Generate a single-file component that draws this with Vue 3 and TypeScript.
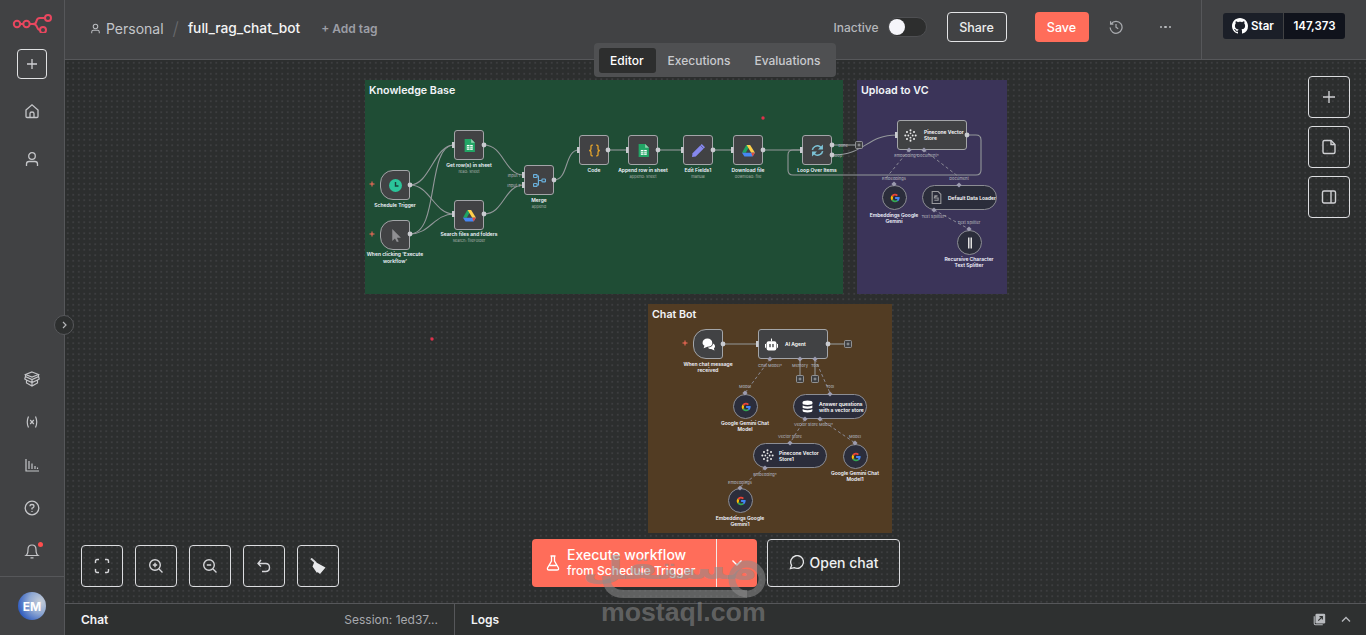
<script setup lang="ts">
interface FlowNode { id: string; x: number; y: number; w: number; h: number; shape: 'box' | 'trigger' | 'circle' | 'pill' | 'wide'; icon: string; text?: string[] }
interface Caption { x: number; y: number; t: string; sub?: boolean }

const groups = [
  { t: 'Knowledge Base', x: 365, y: 80, w: 478, h: 214, c: '#1f4d35' },
  { t: 'Upload to VC', x: 857, y: 80, w: 150, h: 214, c: '#3b3459' },
  { t: 'Chat Bot', x: 648, y: 303.5, w: 244, h: 229.5, c: '#523c23' },
]

const nodes: FlowNode[] = [
  { id: 'a', x: 380, y: 170, w: 30, h: 30, shape: 'trigger', icon: 'clock' },
  { id: 'b', x: 380, y: 220, w: 30, h: 30, shape: 'trigger', icon: 'cursor' },
  { id: 'c', x: 454, y: 130, w: 30, h: 30, shape: 'box', icon: 'sheet' },
  { id: 'd', x: 454, y: 200, w: 30, h: 30, shape: 'box', icon: 'drive' },
  { id: 'e', x: 524, y: 165, w: 30, h: 30, shape: 'box', icon: 'merge' },
  { id: 'f', x: 579, y: 135, w: 30, h: 30, shape: 'box', icon: 'code' },
  { id: 'g', x: 628, y: 135, w: 30, h: 30, shape: 'box', icon: 'sheet' },
  { id: 'h', x: 683, y: 135, w: 30, h: 30, shape: 'box', icon: 'pen' },
  { id: 'i', x: 733, y: 135, w: 30, h: 30, shape: 'box', icon: 'drive' },
  { id: 'j', x: 802, y: 135, w: 30, h: 30, shape: 'box', icon: 'loop' },
  { id: 'k', x: 897, y: 120, w: 70, h: 30, shape: 'wide', icon: 'pine', text: ['Pinecone Vector', 'Store'] },
  { id: 'l', x: 882, y: 185, w: 25, h: 25, shape: 'circle', icon: 'google' },
  { id: 'm', x: 922, y: 185, w: 75, h: 25, shape: 'pill', icon: 'doc', text: ['Default Data Loader'] },
  { id: 'n', x: 957, y: 230, w: 25, h: 25, shape: 'circle', icon: 'split' },
  { id: 'o', x: 693, y: 329, w: 30, h: 30, shape: 'trigger', icon: 'chat' },
  { id: 'p', x: 758, y: 329, w: 70, h: 30, shape: 'wide', icon: 'robot', text: ['AI Agent'] },
  { id: 'q', x: 733, y: 394, w: 25, h: 25, shape: 'circle', icon: 'google' },
  { id: 'r', x: 793, y: 394, w: 74, h: 25, shape: 'pill', icon: 'db', text: ['Answer questions', 'with a vector store'] },
  { id: 's', x: 753, y: 443, w: 74, h: 25, shape: 'pill', icon: 'pine', text: ['Pinecone Vector', 'Store1'] },
  { id: 't', x: 843, y: 444, w: 25, h: 25, shape: 'circle', icon: 'google' },
  { id: 'u', x: 728, y: 488, w: 25, h: 25, shape: 'circle', icon: 'google' },
]

const captions: Caption[] = [
  { x: 395, y: 205, t: 'Schedule Trigger' },
  { x: 395, y: 254, t: "When clicking 'Execute" },
  { x: 395, y: 261, t: "workflow'" },
  { x: 469, y: 165, t: 'Get row(s) in sheet' },
  { x: 469, y: 171.5, t: 'read: sheet', sub: true },
  { x: 469, y: 234, t: 'Search files and folders' },
  { x: 469, y: 241, t: 'search: fileFolder', sub: true },
  { x: 539, y: 200, t: 'Merge' },
  { x: 539, y: 206.5, t: 'append', sub: true },
  { x: 594, y: 170, t: 'Code' },
  { x: 643, y: 170, t: 'Append row in sheet' },
  { x: 643, y: 176.5, t: 'append: sheet', sub: true },
  { x: 698, y: 170, t: 'Edit Fields1' },
  { x: 698, y: 176.5, t: 'manual', sub: true },
  { x: 748, y: 170, t: 'Download file' },
  { x: 748, y: 176.5, t: 'download: file', sub: true },
  { x: 817, y: 170, t: 'Loop Over Items' },
  { x: 894, y: 215, t: 'Embeddings Google' },
  { x: 894, y: 221, t: 'Gemini' },
  { x: 969, y: 259, t: 'Recursive Character' },
  { x: 969, y: 265, t: 'Text Splitter' },
  { x: 708, y: 364, t: 'When chat message' },
  { x: 708, y: 370, t: 'received' },
  { x: 745, y: 423, t: 'Google Gemini Chat' },
  { x: 745, y: 429, t: 'Model' },
  { x: 855, y: 473, t: 'Google Gemini Chat' },
  { x: 855, y: 479, t: 'Model1' },
  { x: 740, y: 518, t: 'Embeddings Google' },
  { x: 740, y: 524, t: 'Gemini1' },
]

const ports: Caption[] = [
  { x: 906, y: 155, t: 'Embedding*' }, { x: 928, y: 155, t: 'Document*' },
  { x: 894, y: 178, t: 'Embeddings' }, { x: 959, y: 178, t: 'Document' },
  { x: 934, y: 216, t: 'Text Splitter*' }, { x: 969, y: 222, t: 'Text Splitter' },
  { x: 770, y: 365, t: 'Chat Model*' }, { x: 800, y: 365, t: 'Memory' }, { x: 815, y: 365, t: 'Tool' },
  { x: 745, y: 386, t: 'Model' }, { x: 830, y: 386, t: 'Tool' },
  { x: 806, y: 423.5, t: 'Vector Store' }, { x: 826, y: 423.5, t: 'Model*' },
  { x: 790, y: 436, t: 'Vector Store' }, { x: 855, y: 436, t: 'Model' },
  { x: 765, y: 473.5, t: 'Embedding*' }, { x: 740, y: 481.5, t: 'Embeddings' },
  { x: 514, y: 174.5, t: 'Input 1' }, { x: 514, y: 184.5, t: 'Input 2' },
  { x: 843, y: 145, t: 'done' }, { x: 838, y: 155, t: 'loop' },
]

const solid = [
  'M410 185 C430 185 434 145 454 145', 'M410 185 C430 185 434 214 454 214',
  'M410 234 C440 234 426 145 454 145', 'M410 234 C430 234 434 214 454 214',
  'M484 145 C504 145 504 175 524 175', 'M484 214 C504 214 504 185 524 185',
  'M554 180 C569 180 564 150 579 150', 'M608 150 H628', 'M658 150 H683', 'M713 150 H733', 'M763 150 H802',
  'M832 145 H855', 'M832 155 C866 155 866 135 897 135',
  'M967 135 H976 Q981 135 981 140 V170 Q981 175 976 175 H793 Q788 175 788 170 V155 Q788 150 793 150 H802',
  'M723 344 H758', 'M828 344 H844', 'M800 359 V375', 'M815 359 V375',
]
const dashed = [
  'M909 150 L886 178', 'M924 150 L959 177', 'M934 210 L969 229',
  'M770 359 L745 393', 'M815 359 L830 393', 'M805 419 L790 443', 'M820 419 L855 443', 'M765 468 L740 487',
]
const dots = [
  [410, 185], [410, 234], [484, 145], [484, 214], [554, 180], [608, 150], [658, 150], [713, 150], [763, 150],
  [832, 145], [832, 155], [967, 135], [723, 344], [828, 344],
]
const inputs = [[454, 145], [454, 214], [524, 175], [524, 185], [579, 150], [628, 150], [683, 150], [733, 150], [802, 150], [897, 135], [758, 344]]
const diamonds = [
  [909, 150], [924, 150], [894, 184], [959, 185], [934, 210], [969, 229],
  [770, 359], [800, 359], [815, 359], [745, 393], [830, 394], [805, 419], [820, 419], [790, 443], [855, 443], [765, 468], [740, 488],
]
const plusBoxes = [[859, 145], [848, 344], [800, 379], [815, 379]]
const asterisks = [[372, 184], [372, 234], [685, 343]]
const redDots = [[763, 118], [432, 339]]

const zoomTools = ['fit', 'zin', 'zout', 'undo', 'broom']
</script>

<template>
  <div class="app">
    <svg class="defs" width="0" height="0" aria-hidden="true">
      <symbol id="clock" viewBox="0 0 24 24"><circle cx="12" cy="12" r="12" fill="#2bc49a"/><path d="M12 5.500V13h5.500" fill="none" stroke="#17403a" stroke-width="2.600"/></symbol>
      <symbol id="cursor" viewBox="0 0 24 24"><path d="M6 0 L22 16 H14.500 L18 23 L14.500 24 L11 17.500 L6 22 Z" fill="#8f8f92"/></symbol>
      <symbol id="sheet" viewBox="0 0 24 24"><path d="M3 0H15L22 7V24H3Z" fill="#22a565"/><path d="M15 0L22 7H15Z" fill="#8ed1ae"/><path d="M7 11H18V20H7Z" fill="#fff"/><path d="M7 14H18M7 17H18M12.500 11V20" stroke="#22a565" stroke-width="1.200"/></symbol>
      <symbol id="drive" viewBox="0 0 24 24"><path d="M8 2H15L7 16H0Z" fill="#1fa463"/><path d="M15 2L24 16H17L8.500 2Z" fill="#ffd04b"/><path d="M0 16L4.500 23H19.500L24 16Z" fill="#4687f4"/><path d="M17 16H24L19.500 23Z" fill="#e14b3b"/></symbol>
      <symbol id="merge" viewBox="0 0 24 24"><g fill="none" stroke="#6ab0dc" stroke-width="2.200"><rect x="1" y="1" width="6.500" height="5.500" rx="1.200"/><rect x="1" y="17.500" width="6.500" height="5.500" rx="1.200"/><rect x="16.500" y="9.200" width="6.500" height="5.500" rx="1.200"/><path d="M7.500 3.700H10V20.300H7.500M10 12H16.500"/></g></symbol>
      <symbol id="code" viewBox="0 0 24 24"><g fill="none" stroke="#e3a32b" stroke-width="2.400"><path d="M9 2H7.500Q5.500 2 5.500 4V9Q5.500 12 2 12Q5.500 12 5.500 15V20Q5.500 22 7.500 22H9"/><path d="M15 2H16.500Q18.500 2 18.500 4V9Q18.500 12 22 12Q18.500 12 18.500 15V20Q18.500 22 16.500 22H15"/></g></symbol>
      <symbol id="pen" viewBox="0 0 24 24"><path d="M18 0L24 6L7 23L0 24L1 17Z" fill="#8688ee"/><path d="M15.500 2.500L21.500 8.500" stroke="#414244" stroke-width="1"/></symbol>
      <symbol id="loop" viewBox="0 0 24 24"><g fill="none" stroke="#7cc3d6" stroke-width="2.800"><path d="M2.500 11C3.500 5 11 1.500 16 4.500L20 8"/><path d="M21.500 13C20.500 19 13 22.500 8 19.500L4 16"/></g><path d="M22 1V10H13Z" fill="#7cc3d6"/><path d="M2 23V14H11Z" fill="#7cc3d6"/></symbol>
      <symbol id="pine" viewBox="0 0 24 24"><g fill="#e8e8e8"><circle cx="12" cy="2.500" r="1.900"/><circle cx="12" cy="21.500" r="1.900"/><circle cx="2.500" cy="12" r="1.900"/><circle cx="21.500" cy="12" r="1.900"/><circle cx="5.500" cy="5.500" r="1.900"/><circle cx="18.500" cy="5.500" r="1.900"/><circle cx="5.500" cy="18.500" r="1.900"/><circle cx="18.500" cy="18.500" r="1.900"/><circle cx="12" cy="8" r="1.700"/><circle cx="12" cy="16" r="1.700"/><circle cx="8" cy="12" r="1.700"/><circle cx="16" cy="12" r="1.700"/></g></symbol>
      <symbol id="google" viewBox="0 0 24 24"><path d="M5 7A8.500 8.500 0 0 1 18 6L15.300 8.700A4.800 4.800 0 0 0 8.200 9.800Z" fill="#ea4335"/><path d="M5 7L8.200 9.800A4.800 4.800 0 0 0 8.200 14.300L5 17A8.800 8.800 0 0 1 5 7Z" fill="#fbbc05"/><path d="M5 17L8.200 14.300A4.800 4.800 0 0 0 15 16L18 18.500A8.800 8.800 0 0 1 5 17Z" fill="#34a853"/><path d="M21.200 10.200H12.200V13.800H17C16.600 15 15.800 15.700 15 16L18 18.500C20 16.700 21.800 14 21.200 10.200Z" fill="#4285f4"/></symbol>
      <symbol id="doc" viewBox="0 0 24 24"><g fill="none" stroke="#9a9a9e" stroke-width="2"><path d="M4 1H15L20 6V23H4Z"/><path d="M8 9H14Q8 9 8 13H15V17H8"/></g></symbol>
      <symbol id="split" viewBox="0 0 24 24"><path d="M8 1H11V23H8ZM13 1H16V23H13Z" fill="#e0e0e0"/></symbol>
      <symbol id="chat" viewBox="0 0 24 24"><path d="M1 9C1 4 5 1 10 1S19 4 19 9 15 16 10 16L3 19 4.500 14C2.500 13 1 11 1 9Z" fill="#fff"/><path d="M20 10C23 11 24 13 24 15 24 17 23 18 22 19L23 23 17 20.500C14 20.500 12 19.500 11 17.500 15 17.500 20.500 15 20 10Z" fill="#fff"/></symbol>
      <symbol id="robot" viewBox="0 0 24 24"><path d="M12 1V6" stroke="#fff" stroke-width="2"/><rect x="3" y="6" width="18" height="17" rx="3.500" fill="#fff"/><rect x="0" y="11" width="2" height="7" fill="#fff"/><rect x="22" y="11" width="2" height="7" fill="#fff"/><rect x="8" y="11" width="2.500" height="6" fill="#414244"/><rect x="13.500" y="11" width="2.500" height="6" fill="#414244"/></symbol>
      <symbol id="db" viewBox="0 0 24 24"><g fill="#fff"><path d="M3 4Q3 1 12 1T21 4V7Q21 9 12 9T3 7Z"/><path d="M3 10Q7 12 12 12T21 10V14Q21 16 12 16T3 14Z"/><path d="M3 17Q7 19 12 19T21 17V20Q21 23 12 23T3 20Z"/></g></symbol>
    </svg>

    <aside class="side">
      <svg class="logo" viewBox="0 0 40 20" fill="none" stroke="#e8475f" stroke-width="2">
        <circle cx="5" cy="11" r="3.200"/><circle cx="14.500" cy="11" r="3.200"/><circle cx="31" cy="17" r="3"/><circle cx="36" cy="5" r="3"/>
        <path d="M8.200 11H11.300M17.700 11H21Q24 11 24.500 8T28 5H33M21 11Q24 11 25 14T28 17"/>
      </svg>
      <button class="side-add"><svg width="10" height="10" viewBox="0 0 14 14" stroke="#cfd0d3" stroke-width="1.800"><path d="M7 0V14M0 7H14"/></svg></button>
      <div class="side-icons top-icons">
        <svg viewBox="0 0 16 16" fill="none" stroke="#c4c5c8" stroke-width="1.300"><path d="M2 7L8 1.800 14 7V13.500Q14 14.500 13 14.500H3Q2 14.500 2 13.500Z"/><path d="M6 14.500V10.500Q6 9 8 9T10 10.500V14.500"/></svg>
        <svg viewBox="0 0 16 16" fill="none" stroke="#c4c5c8" stroke-width="1.300"><circle cx="8" cy="5" r="3.300"/><path d="M2.500 15V13Q2.500 10.500 5 10.500H11Q13.500 10.500 13.500 13V15"/></svg>
      </div>
      <div class="side-icons bottom-icons">
        <svg viewBox="0 0 16 16" fill="none" stroke="#c4c5c8" stroke-width="1.200"><path d="M8 1L14.500 3.500 8 6 1.500 3.500Z"/><path d="M1.500 3.500V5.500L8 8.500 14.500 5.500V3.500M1.500 5.500L0.800 8 2.500 9V12L8 15 13.500 12V9L15.200 8 14.500 5.500M8 8.500V15M2.500 9L8 11.500 13.500 9"/></svg>
        <svg viewBox="0 0 16 16" fill="none" stroke="#c4c5c8" stroke-width="1.200"><path d="M4.500 2.500Q2 8 4.500 13.500M11.500 2.500Q14 8 11.500 13.500M6.200 6L9.800 10M9.800 6L6.200 10"/></svg>
        <svg viewBox="0 0 16 16" fill="none" stroke="#c4c5c8" stroke-width="1.200"><path d="M2 2V14H15M5 12V4M8 12V6.500M11 12V9M13.500 12V10.500"/></svg>
        <svg viewBox="0 0 16 16" fill="none" stroke="#c4c5c8" stroke-width="1.300"><circle cx="8" cy="8" r="6.800"/><path d="M6 6.300Q6 4.500 8 4.500T10 6.300Q10 7.500 8 8.300V9.500M8 11V12"/></svg>
        <span class="bell">
          <svg viewBox="0 0 16 16" fill="none" stroke="#c4c5c8" stroke-width="1.200"><path d="M2 12.500Q4 11 4 6.500 4 2 8 2T12 6.500Q12 11 14 12.500ZM6.500 14.800H9.500"/></svg>
          <i></i>
        </span>
      </div>
      <div class="side-foot"><span class="avatar">EM</span></div>
      <button class="collapse"><svg width="8" height="8" viewBox="0 0 8 8" fill="none" stroke="#b5b6b9" stroke-width="1.200"><path d="M3 1L6 4 3 7"/></svg></button>
    </aside>

    <main class="main">
      <header class="head">
        <div class="crumbs">
          <svg class="crumb-ic" width="11" height="11" viewBox="0 0 16 16" fill="none" stroke="#b9bbbf" stroke-width="1.500"><circle cx="8" cy="5" r="3.300"/><path d="M2.500 15V13Q2.500 10.500 5 10.500H11Q13.500 10.500 13.500 13V15"/></svg>
          <span class="personal">Personal</span>
          <span class="slash">/</span>
          <span class="title">full_rag_chat_bot</span>
          <span class="tag">+ Add tag</span>
        </div>
        <div class="actions">
          <span class="inactive">Inactive</span>
          <span class="toggle"><i></i></span>
          <button class="share">Share</button>
          <button class="save">Save</button>
          <svg class="hist" width="14" height="14" viewBox="0 0 16 16" fill="none" stroke="#a9abaf" stroke-width="1.400"><path d="M2.500 4.500A6.800 6.800 0 1 1 1.300 8.500M1.800 1.500V4.800H5M8 4.500V8.300L10.500 10"/></svg>
          <span class="more"><i></i><i></i><i></i></span>
        </div>
        <div class="gh">
          <span class="gh-star">
            <svg width="16" height="16" viewBox="0 0 16 16" fill="#fff"><path d="M8 0C3.580 0 0 3.580 0 8c0 3.540 2.290 6.530 5.470 7.590.4.070.55-.17.55-.38 0-.19-.01-.82-.01-1.490-2.010.37-2.530-.49-2.690-.94-.09-.23-.48-.94-.82-1.130-.28-.15-.68-.52-.01-.53.63-.01 1.080.58 1.230.82.72 1.210 1.870.87 2.330.66.070-.52.28-.87.51-1.070-1.780-.2-3.640-.89-3.640-3.950 0-.87.31-1.590.82-2.150-.08-.2-.36-1.020.08-2.120 0 0 .67-.21 2.200.82.640-.18 1.320-.27 2-.27s1.360.09 2 .27c1.530-1.040 2.200-.82 2.200-.82.44 1.100.16 1.920.08 2.120.51.560.82 1.270.82 2.150 0 3.070-1.870 3.750-3.650 3.950.29.250.54.730.54 1.480 0 1.070-.01 1.930-.01 2.200 0 .21.150.46.550.38A8.010 8.010 0 0 0 16 8c0-4.420-3.580-8-8-8z"/></svg>
            Star
          </span>
          <span class="gh-count">147,373</span>
        </div>
      </header>

      <div class="tabs">
        <span class="tab active">Editor</span>
        <span class="tab">Executions</span>
        <span class="tab">Evaluations</span>
      </div>

      <section class="canvas">
        <div class="world">
          <div v-for="g in groups" :key="g.t" class="group" :style="{ left: g.x + 'px', top: g.y + 'px', width: g.w + 'px', height: g.h + 'px', background: g.c }">{{ g.t }}</div>

          <svg class="wires" width="1366" height="635" viewBox="0 0 1366 635">
            <path v-for="d in solid" :key="d" :d="d" class="wire"/>
            <path v-for="d in dashed" :key="d" :d="d" class="dash"/>
          </svg>

          <div v-for="n in nodes" :key="n.id" class="node" :class="n.shape" :style="{ left: n.x + 'px', top: n.y + 'px', width: n.w + 'px', height: n.h + 'px' }">
            <svg class="node-ic"><use :href="'#' + n.icon"/></svg>
            <span v-if="n.text" class="node-text"><template v-for="line in n.text" :key="line">{{ line }}<br></template></span>
          </div>

          <svg class="wires" width="1366" height="635" viewBox="0 0 1366 635">
            <circle v-for="p in dots" :key="p.join()" :cx="p[0]" :cy="p[1]" r="2.400" fill="#c9cbd0"/>
            <path v-for="p in inputs" :key="p.join()" :d="`M${p[0] - 2} ${p[1] - 3}h2.500v6h-2.500z`" fill="#c9cbd0"/>
            <path v-for="p in diamonds" :key="p.join()" :d="`M${p[0]} ${p[1] - 2.600}l2.600 2.600-2.600 2.600-2.600-2.600z`" fill="#9c9cb0"/>
            <g v-for="p in plusBoxes" :key="p.join()">
              <rect :x="p[0] - 3.500" :y="p[1] - 3.500" width="7" height="7" rx="1" fill="#3e3f41" stroke="#a5a7ab" stroke-width=".8"/>
              <path :d="`M${p[0] - 1.500} ${p[1]}h3M${p[0]} ${p[1] - 1.500}v3`" stroke="#cfd0d3" stroke-width=".6"/>
            </g>
            <path v-for="p in asterisks" :key="p.join()" :d="`M${p[0] - 2.500} ${p[1]}h5M${p[0]} ${p[1] - 2.500}v5`" stroke="#ff6d5a" stroke-width="1"/>
            <circle v-for="p in redDots" :key="p.join()" :cx="p[0]" :cy="p[1]" r="1.700" fill="#e0314b"/>
          </svg>

          <span v-for="c in captions" :key="c.t + c.y" class="cap" :class="{ sub: c.sub }" :style="{ left: c.x + 'px', top: c.y + 'px' }">{{ c.t }}</span>
          <span v-for="c in ports" :key="c.t + c.x" class="port" :style="{ left: c.x + 'px', top: c.y + 'px' }">{{ c.t }}</span>
        </div>

        <div class="right-tools">
          <button class="tool big"><svg width="12" height="12" viewBox="0 0 14 14" stroke="#cfd0d3" stroke-width="1.600"><path d="M7 0V14M0 7H14"/></svg></button>
          <button class="tool big"><svg width="16" height="16" viewBox="0 0 16 16" fill="none" stroke="#cfd0d3" stroke-width="1.400"><path d="M2 3Q2 1.500 3.500 1.500H10L14 5.500V13Q14 14.500 12.500 14.500H3.500Q2 14.500 2 13Z"/><path d="M10 1.500V5.500H14"/></svg></button>
          <button class="tool big"><svg width="16" height="16" viewBox="0 0 16 16" fill="none" stroke="#cfd0d3" stroke-width="1.400"><rect x="1.500" y="2" width="13" height="12" rx="1.500"/><path d="M10 2V14"/></svg></button>
        </div>

        <div class="zoom-tools">
          <button v-for="z in zoomTools" :key="z" class="tool">
            <svg width="16" height="16" viewBox="0 0 16 16" fill="none" stroke="#d5d6d9" stroke-width="1.400">
              <path v-if="z === 'fit'" d="M1.500 5V3Q1.500 1.500 3 1.500H5M11 1.500H13Q14.500 1.500 14.500 3V5M14.500 11V13Q14.500 14.500 13 14.500H11M5 14.500H3Q1.500 14.500 1.500 13V11"/>
              <template v-else-if="z === 'zin'"><circle cx="7" cy="7" r="5.300"/><path d="M11 11L14.500 14.500M4.800 7H9.200M7 4.800V9.200"/></template>
              <template v-else-if="z === 'zout'"><circle cx="7" cy="7" r="5.300"/><path d="M11 11L14.500 14.500M4.800 7H9.200"/></template>
              <path v-else-if="z === 'undo'" d="M5 2L2 5.500 5 8.500M2 5.500H9.500Q13.500 5.500 13.500 9.500T9.500 13.500H6"/>
              <template v-else><path d="M1 0.500L6 5" stroke-width="2"/><path d="M4.500 3.500L15.500 9.500 10 16 7.500 14 7 15 2.500 8.500Z" fill="#e8e9eb" stroke="none"/></template>
            </svg>
          </button>
        </div>

        <div class="run">
          <button class="exec">
            <span class="exec-main">
              <svg width="14" height="16" viewBox="0 0 14 16" fill="none" stroke="#fff" stroke-width="1.300"><path d="M4.500 1H9.500M5.500 1V6L1.500 13Q1 15 3 15H11Q13 15 12.500 13L8.500 6V1M3.500 10.500H10.500"/></svg>
              <span class="exec-text"><b>Execute workflow</b><small>from Schedule Trigger</small></span>
            </span>
            <span class="exec-more"><svg width="12" height="8" viewBox="0 0 12 8" fill="none" stroke="#fff" stroke-width="1.400"><path d="M1.500 1.500L6 6 10.500 1.500"/></svg></span>
          </button>
          <button class="open-chat">
            <svg width="15" height="15" viewBox="0 0 16 16" fill="none" stroke="#e5e6e8" stroke-width="1.400"><path d="M1.500 14.500L2.800 11A6.800 6.800 0 1 1 5.500 13.500Z"/></svg>
            Open chat
          </button>
        </div>
      </section>

      <footer class="panel">
        <div class="panel-chat"><b>Chat</b><span>Session: 1ed37...</span></div>
        <div class="panel-logs">
          <b>Logs</b>
          <span class="panel-ic">
            <svg width="13" height="13" viewBox="0 0 16 16"><rect x="3" y="1" width="12" height="12" rx="1.500" fill="#b7b9bd"/><path d="M6.500 9.500L11.500 4.500M8 4.500H11.500V8" fill="none" stroke="#2e3030" stroke-width="1.400"/><path d="M1.500 4V13Q1.500 14.500 3 14.500H12" fill="none" stroke="#b7b9bd" stroke-width="1.300"/></svg>
            <svg width="10" height="7" viewBox="0 0 10 7" fill="none" stroke="#b7b9bd" stroke-width="1.300"><path d="M1 5.500L5 1.500 9 5.500"/></svg>
          </span>
        </div>
      </footer>
    </main>

    <div class="mark">
      <svg width="168" height="56" viewBox="0 0 168 56" fill="none" stroke="rgba(140,140,140,.55)"><path d="M6 28C6 40 13 46 24 46H147" stroke-width="8"/><circle cx="147" cy="31" r="15" stroke-width="7"/></svg>
      <span class="mark-ar">مستقل</span>
      <span class="mark-en">mostaql.com</span>
    </div>
  </div>
</template>

<style>
html, body { margin: 0; background: #2c2e2e; overflow: hidden; }
</style>

<style scoped>
.app {
  position: relative;
  display: grid;
  grid-template-columns: 65px 1fr;
  width: 1366px;
  height: 635px;
  overflow: hidden;
  font-family: Inter, "Noto Sans", sans-serif;
  color: #fff;
}
.defs { position: absolute; }
button { font-family: inherit; cursor: pointer; }

.side {
  position: relative;
  display: flex;
  flex-direction: column;
  align-items: center;
  background: #414244;
  border-right: 1px solid #56575a;
  z-index: 3;
}
.logo { width: 40px; height: 20px; margin-top: 13px; }
.side-add {
  display: flex;
  align-items: center;
  justify-content: center;
  width: 30px;
  height: 30px;
  margin-top: 16px;
  padding: 0;
  background: transparent;
  border: 1px solid #e1e2e4;
  border-radius: 4px;
}
.side-icons { display: flex; flex-direction: column; align-items: center; }
.side-icons svg { width: 16px; height: 16px; display: block; }
.top-icons { gap: 32px; margin-top: 24px; }
.bottom-icons { gap: 27px; margin-top: auto; margin-bottom: 17px; }
.bell { position: relative; display: block; }
.bell i { position: absolute; left: 14px; top: -1px; width: 5px; height: 5px; border-radius: 50%; background: #ff4d4d; }
.side-foot {
  align-self: stretch;
  display: flex;
  justify-content: center;
  padding: 15px 0 15px;
  border-top: 1px solid #56575a;
}
.avatar {
  display: flex;
  align-items: center;
  justify-content: center;
  width: 28px;
  height: 28px;
  border-radius: 50%;
  font-size: 12px;
  font-weight: 700;
  background: radial-gradient(circle at 80% 35%, #c5ccd6 0, #8fa8d2 40%, #2f5cc0 80%);
}
.collapse {
  position: absolute;
  left: 54px;
  top: 315px;
  width: 20px;
  height: 20px;
  padding: 0;
  display: flex;
  align-items: center;
  justify-content: center;
  border-radius: 50%;
  background: #2d2f2f;
  border: 1px solid #56575a;
}

.main { position: relative; display: flex; flex-direction: column; min-width: 0; }
.head {
  display: flex;
  align-items: center;
  height: 60px;
  box-sizing: border-box;
  flex: none;
  background: #414244;
  border-bottom: 1px solid #56575a;
}
.crumbs { display: flex; align-items: center; padding-left: 25px; margin-bottom: 3px; }
.crumb-ic { margin-right: 5px; }
.personal { font-size: 14px; color: #c3c5c9; }
.slash { margin: 0 9px 0 9px; font-size: 18px; font-weight: 300; color: #68696c; }
.title { font-size: 13.750px; font-weight: 500; color: #f4f4f5; }
.tag { margin-left: 21px; font-size: 12px; font-weight: 600; color: #9c9ea6; }
.actions { display: flex; align-items: center; margin-left: auto; margin-bottom: 5px; }
.inactive { font-size: 12px; font-weight: 500; color: #b5b7bb; }
.toggle {
  position: relative;
  width: 39px;
  height: 20px;
  box-sizing: border-box;
  margin-left: 9px;
  border-radius: 10px;
  background: #2d2e2e;
  border: 1px solid #4e4f52;
}
.toggle i { position: absolute; left: 0; top: 1px; width: 16px; height: 16px; border-radius: 50%; background: #f5f5fa; }
.share, .save { height: 30px; padding: 0; font-size: 12.500px; font-weight: 500; border-radius: 4px; }
.share { width: 60px; margin-left: 20px; background: transparent; color: #eceded; border: 1px solid #e3e4e6; }
.save { width: 54px; margin-left: 28px; background: #ff6d5a; color: #fff; border: none; }
.hist { margin-left: 20px; }
.more { display: flex; gap: 2px; margin: 0 30px 0 37px; }
.more i { width: 2.500px; height: 2.500px; border-radius: 50%; background: #b9bbbe; }
.gh {
  align-self: stretch;
  display: flex;
  align-items: center;
  padding: 0 21px 7px 21px;
  border-left: 1px solid #56575a;
}
.gh span { display: flex; align-items: center; height: 26px; font-size: 11.500px; font-weight: 600; }
.gh-star { gap: 3px; width: 60px; justify-content: center; background: #1b1f28; border-radius: 3px 0 0 3px; }
.gh-count { width: 61px; margin-left: 1px; justify-content: center; background: #10131c; border-radius: 0 3px 3px 0; }

.tabs {
  position: absolute;
  left: 529px;
  top: 43px;
  z-index: 2;
  display: flex;
  align-items: center;
  height: 34px;
  width: 242px;
  padding: 0 5px;
  box-sizing: border-box;
  background: #4f5052;
  border-radius: 4px;
}
.tab { display: flex; align-items: center; height: 25px; padding: 0 12px; font-size: 12px; font-weight: 500; color: #c9cace; border-radius: 3px; }
.tab.active { padding: 0 12px 0 11px; background: #2d2e2e; color: #fff; }

.canvas {
  position: relative;
  flex: 1;
  overflow: hidden;
  background-color: #2c2e2e;
  background-image: radial-gradient(circle, #424345 0.6px, transparent 0.8px);
  background-size: 5.500px 5.500px;
}
.world { position: absolute; left: -65px; top: -60px; width: 1366px; height: 635px; }
.group {
  position: absolute;
  box-sizing: border-box;
  padding: 4px 4px;
  font-size: 10.700px;
  line-height: 14px;
  font-weight: 600;
  color: #f2f4f8;
}
.wires { position: absolute; left: 0; top: 0; pointer-events: none; }
.wire { fill: none; stroke: #93979a; stroke-width: 1.100; }
.dash { fill: none; stroke: #8a8a96; stroke-width: 1; stroke-dasharray: 3 2.500; }
.node {
  position: absolute;
  box-sizing: border-box;
  display: flex;
  align-items: center;
  justify-content: center;
  background: #414244;
  border: 1px solid #a3a5a8;
  border-radius: 3px;
}
.node-ic { width: 13px; height: 13px; flex: none; }
.node.trigger { border-radius: 13px 3px 3px 13px; }
.node.wide { justify-content: flex-start; padding-left: 6px; gap: 7px; }
.node.circle, .node.pill { background: #2b2d3b; border-color: #8c8d94; border-radius: 13px; }
.node.circle .node-ic { width: 12px; height: 12px; }
.node.pill { justify-content: flex-start; padding-left: 7px; gap: 5px; }
.node-text { font-size: 5px; line-height: 6px; font-weight: 600; color: #fff; white-space: nowrap; }
.cap {
  position: absolute;
  transform: translate(-50%, -50%);
  font-size: 5px;
  line-height: 6px;
  font-weight: 600;
  color: #f2f5ff;
  white-space: nowrap;
}
.cap.sub { font-size: 4px; font-weight: 400; color: #a9b0ab; }
.port {
  position: absolute;
  transform: translate(-50%, -50%);
  font-size: 4px;
  line-height: 5px;
  font-weight: 500;
  color: #a7a8b2;
  white-space: nowrap;
}

.tool {
  display: flex;
  align-items: center;
  justify-content: center;
  width: 42px;
  height: 42px;
  padding: 0;
  background: transparent;
  border: 1px solid #dcdde0;
  border-radius: 4px;
}
.right-tools { position: absolute; right: 16px; top: 16px; display: flex; flex-direction: column; gap: 8px; }
.zoom-tools { position: absolute; left: 16px; bottom: 16px; display: flex; gap: 12px; }
.run { position: absolute; left: 467px; bottom: 16px; display: flex; gap: 10px; }
.exec {
  display: flex;
  width: 225px;
  height: 48px;
  padding: 0;
  background: #ff6d5a;
  border: none;
  border-radius: 4px;
  color: #fff;
}
.exec-main { flex: 1; display: flex; align-items: center; gap: 7px; padding-left: 14px; }
.exec-text { display: flex; flex-direction: column; align-items: flex-start; transform: translateY(-1px); }
.exec-text b { font-size: 14px; line-height: 17px; font-weight: 500; }
.exec-text small { font-size: 12px; line-height: 16px; font-weight: 500; }
.exec-more { display: flex; align-items: center; justify-content: center; width: 40px; border-left: 1px solid #f3e9e7; }
.open-chat {
  display: flex;
  align-items: center;
  justify-content: center;
  gap: 6px;
  width: 133px;
  height: 48px;
  padding: 0 0 2px;
  background: transparent;
  color: #eef0f2;
  border: 1px solid #dcdde0;
  border-radius: 4px;
  font-size: 14px;
  font-weight: 500;
}

.panel {
  display: flex;
  flex: none;
  height: 32px;
  box-sizing: border-box;
  background: #2e3030;
  border-top: 1px solid #56575a;
  font-size: 12px;
}
.panel b { font-weight: 600; color: #f2f3f5; }
.panel-chat {
  display: flex;
  align-items: center;
  justify-content: space-between;
  box-sizing: border-box;
  width: 390px;
  padding: 0 16px;
  border-right: 1px solid #56575a;
}
.panel-chat span { color: #a7a9ad; font-size: 12px; }
.panel-logs { flex: 1; display: flex; align-items: center; padding: 0 15px 0 16px; }
.panel-ic { display: flex; align-items: center; gap: 15px; margin-left: auto; }

.mark { position: absolute; left: 600px; top: 548px; width: 168px; height: 80px; pointer-events: none; z-index: 5; }
.mark svg { position: absolute; left: 0; top: 0; }
.mark-ar {
  position: absolute;
  left: 5px;
  width: 130px;
  top: 2px;
  text-align: center;
  font-family: "DejaVu Sans", sans-serif;
  font-size: 32px;
  line-height: 36px;
  font-weight: 700;
  color: rgba(140, 140, 140, .55);
  transform: scaleX(1.5);
}
.mark-en {
  position: absolute;
  left: 1px;
  top: 49px;
  font-family: "Liberation Sans", sans-serif;
  font-size: 26.700px;
  line-height: 30px;
  font-weight: 700;
  color: rgba(140, 140, 140, .55);
}
</style>
